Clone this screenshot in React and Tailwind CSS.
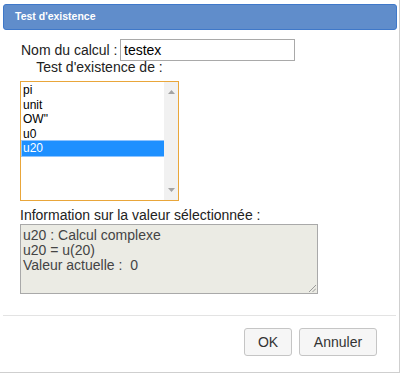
import React from "react";

const items = ["pi", "unit", "OW\"", "u0", "u20"];

export default function App() {
  return (
    <div
      className="w-[400px] h-[373px] bg-white border-r border-b border-[#cfcfcf] flex flex-col text-[#222]"
      style={{ fontFamily: '"Liberation Sans", Arial, sans-serif' }}
    >
      <div className="mt-[4px] mx-[3px] mr-[2px] h-[26px] rounded-[3px] border border-[#3f78c9] bg-[#608dcb] flex items-center pl-[11px]">
        <span className="text-white font-bold text-[10.5px]">Test d'existence</span>
      </div>

      <div className="flex flex-col pl-[20px]">
        <div className="flex items-center mt-[9px] h-[22px]">
          <span className="text-[14px] ml-[1px] w-[99px] text-[#222]">Nom du calcul :</span>
          <div className="w-[175px] h-[22px] border border-[#a9a9a9] flex items-center pl-[3px] text-[14px] text-black">
            testex
          </div>
        </div>

        <div className="w-[159px] text-center text-[14px] leading-[16px] mt-[-2px] text-[#222]">
          Test d'existence de :
        </div>

        <div className="mt-[6px] w-[159px] h-[120px] border border-[#e9a63a] flex">
          <div className="flex-1 flex flex-col pt-[1px] pl-[1px]">
            {items.map((it, i) => (
              <div
                key={it}
                className={
                  "h-[14.6px] leading-[14.6px] text-[12px] pl-[1px] " +
                  (i === 4 ? "bg-[#1e90ff] text-white ring-1 ring-[#8ec4ff]" : "text-black")
                }
              >
                {it}
              </div>
            ))}
          </div>
          <div className="w-[14px] bg-[#f1f1f1] flex flex-col items-center justify-between py-[8px]">
            <svg width="7" height="4" viewBox="0 0 7 4">
              <polygon points="3.5,0 7,4 0,4" fill="#a3a3a3" />
            </svg>
            <svg width="7" height="4" viewBox="0 0 7 4">
              <polygon points="0,0 7,0 3.5,4" fill="#a3a3a3" />
            </svg>
          </div>
        </div>

        <div className="mt-[6px] text-[14px] leading-[16px] text-[#222]">
          Information sur la valeur sélectionnée :
        </div>

        <div className="relative mt-[1px] w-[298px] h-[70px] bg-[#ebebe4] border border-[#a9a9a9] pl-[2px] pt-[3px] text-[14px] leading-[15px] text-[#444]">
          <div>u20 : Calcul complexe</div>
          <div>u20 = u(20)</div>
          <div>Valeur actuelle :&nbsp; 0</div>
          <svg className="absolute right-[1px] bottom-[1px]" width="8" height="8" viewBox="0 0 8 8">
            <line x1="1" y1="8" x2="8" y2="1" stroke="#9a9a9a" strokeWidth="1" />
            <line x1="4.5" y1="8" x2="8" y2="4.5" stroke="#9a9a9a" strokeWidth="1" />
          </svg>
        </div>
      </div>

      <div className="mt-[21px] mx-[3px] h-px bg-[#e3e3e3]" />

      <div className="flex justify-end gap-[7px] mt-[12px] pr-[22px]">
        <button className="w-[48px] h-[28px] rounded-[3px] border border-[#c5c5c5] bg-[#f6f6f6] text-[14px] text-[#333]">
          OK
        </button>
        <button className="w-[78px] h-[28px] rounded-[3px] border border-[#c5c5c5] bg-[#f6f6f6] text-[14px] text-[#333]">
          Annuler
        </button>
      </div>
    </div>
  );
}
